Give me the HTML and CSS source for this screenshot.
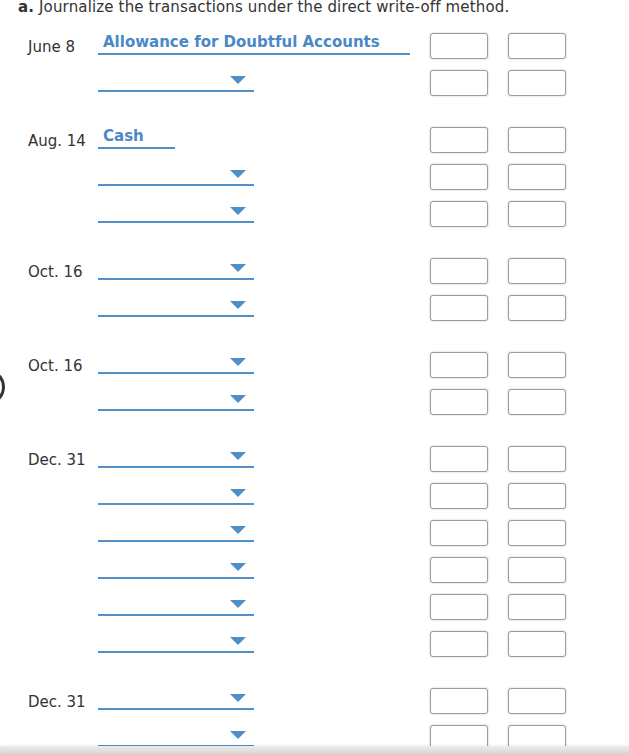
FILE: index.html
```html
<!DOCTYPE html>
<html>
<head>
<meta charset="utf-8">
<link rel="stylesheet" href="styles.css">
</head>
<body>
<div class="page">
  <p class="title"><b>a.</b> Journalize the transactions under the direct write-off method.</p>
  <div class="journal">
    <div class="entry">
      <div class="row">
        <div class="date">June 8</div>
        <div class="acct"><span class="filled filled-wide">Allowance for Doubtful Accounts</span></div>
        <div class="amt"></div><div class="amt"></div>
      </div>
      <div class="row">
        <div class="date"></div>
        <div class="acct"><div class="select"><span class="caret"></span></div></div>
        <div class="amt"></div><div class="amt"></div>
      </div>
    </div>

    <div class="entry">
      <div class="row">
        <div class="date">Aug. 14</div>
        <div class="acct"><span class="filled">Cash</span></div>
        <div class="amt"></div><div class="amt"></div>
      </div>
      <div class="row">
        <div class="date"></div>
        <div class="acct"><div class="select"><span class="caret"></span></div></div>
        <div class="amt"></div><div class="amt"></div>
      </div>
      <div class="row">
        <div class="date"></div>
        <div class="acct"><div class="select"><span class="caret"></span></div></div>
        <div class="amt"></div><div class="amt"></div>
      </div>
    </div>

    <div class="entry">
      <div class="row">
        <div class="date">Oct. 16</div>
        <div class="acct"><div class="select"><span class="caret"></span></div></div>
        <div class="amt"></div><div class="amt"></div>
      </div>
      <div class="row">
        <div class="date"></div>
        <div class="acct"><div class="select"><span class="caret"></span></div></div>
        <div class="amt"></div><div class="amt"></div>
      </div>
    </div>

    <div class="entry">
      <div class="row">
        <div class="date">Oct. 16</div>
        <div class="acct"><div class="select"><span class="caret"></span></div></div>
        <div class="amt"></div><div class="amt"></div>
      </div>
      <div class="row">
        <div class="date"></div>
        <div class="acct"><div class="select"><span class="caret"></span></div></div>
        <div class="amt"></div><div class="amt"></div>
      </div>
    </div>

    <div class="entry">
      <div class="row">
        <div class="date">Dec. 31</div>
        <div class="acct"><div class="select"><span class="caret"></span></div></div>
        <div class="amt"></div><div class="amt"></div>
      </div>
      <div class="row">
        <div class="date"></div>
        <div class="acct"><div class="select"><span class="caret"></span></div></div>
        <div class="amt"></div><div class="amt"></div>
      </div>
      <div class="row">
        <div class="date"></div>
        <div class="acct"><div class="select"><span class="caret"></span></div></div>
        <div class="amt"></div><div class="amt"></div>
      </div>
      <div class="row">
        <div class="date"></div>
        <div class="acct"><div class="select"><span class="caret"></span></div></div>
        <div class="amt"></div><div class="amt"></div>
      </div>
      <div class="row">
        <div class="date"></div>
        <div class="acct"><div class="select"><span class="caret"></span></div></div>
        <div class="amt"></div><div class="amt"></div>
      </div>
      <div class="row">
        <div class="date"></div>
        <div class="acct"><div class="select"><span class="caret"></span></div></div>
        <div class="amt"></div><div class="amt"></div>
      </div>
    </div>

    <div class="entry">
      <div class="row">
        <div class="date">Dec. 31</div>
        <div class="acct"><div class="select"><span class="caret"></span></div></div>
        <div class="amt"></div><div class="amt"></div>
      </div>
      <div class="row">
        <div class="date"></div>
        <div class="acct"><div class="select"><span class="caret"></span></div></div>
        <div class="amt"></div><div class="amt"></div>
      </div>
    </div>
  </div>
</div>
<div class="ring"></div>
<div class="bottom-bar"></div>
</body>
</html>
```

FILE: styles.css
```css
html, body {
  margin: 0;
  padding: 0;
  background: #ffffff;
}

body {
  font-family: "DejaVu Sans", Verdana, sans-serif;
  font-size: 15px;
  color: #333333;
  overflow: hidden;
}

.page {
  width: 629px;
}

.title {
  margin: -1px 0 0 0;
  padding-left: 18px;
  line-height: 17px;
  font-size: 15px;
  letter-spacing: 0.15px;
  color: #333333;
  white-space: nowrap;
}

.title b {
  font-weight: bold;
}

.journal {
  padding: 17px 0 0 28px;
  display: flex;
  flex-direction: column;
  gap: 31px;
}

.entry {
  display: flex;
  flex-direction: column;
  gap: 11px;
}

.row {
  display: flex;
  align-items: flex-start;
  height: 26px;
}

.date {
  width: 70px;
  flex: none;
  padding-top: 6px;
  line-height: 17px;
  font-size: 15px;
  color: #333333;
  white-space: nowrap;
}

.acct {
  width: 312px;
  flex: none;
}

.filled {
  display: inline-block;
  height: 20px;
  line-height: 18px;
  padding: 0 31px 0 5px;
  border-bottom: 2px solid #5091c8;
  color: #4a89c6;
  font-weight: bold;
  font-size: 15px;
  white-space: nowrap;
}

.filled-wide {
  display: block;
}

.select {
  width: 156px;
  height: 22px;
  box-sizing: border-box;
  border-bottom: 2px solid #5091c8;
  display: flex;
  justify-content: flex-end;
  align-items: flex-start;
  padding-right: 8px;
  padding-top: 6px;
}

.caret {
  width: 0;
  height: 0;
  border-left: 8px solid transparent;
  border-right: 8px solid transparent;
  border-top: 8px solid #4f8fc8;
}

.amt {
  width: 58px;
  height: 26px;
  box-sizing: border-box;
  flex: none;
  border: 1px solid #9c9c9c;
  border-radius: 3px;
  box-shadow: 0 0 2px rgba(0, 0, 0, 0.25);
  background: #ffffff;
  margin-left: 20px;
}

.amt + .amt {
  margin-left: 20px;
}

.ring {
  position: absolute;
  left: -31px;
  top: 369px;
  width: 36px;
  height: 36px;
  box-sizing: border-box;
  border: 3px solid #333333;
  border-radius: 50%;
}

.bottom-bar {
  position: fixed;
  left: 0;
  right: 0;
  bottom: 0;
  height: 8px;
  background: linear-gradient(#ececec, #d6d6d6);
  box-shadow: 0 -1px 2px rgba(0, 0, 0, 0.06);
}
```
